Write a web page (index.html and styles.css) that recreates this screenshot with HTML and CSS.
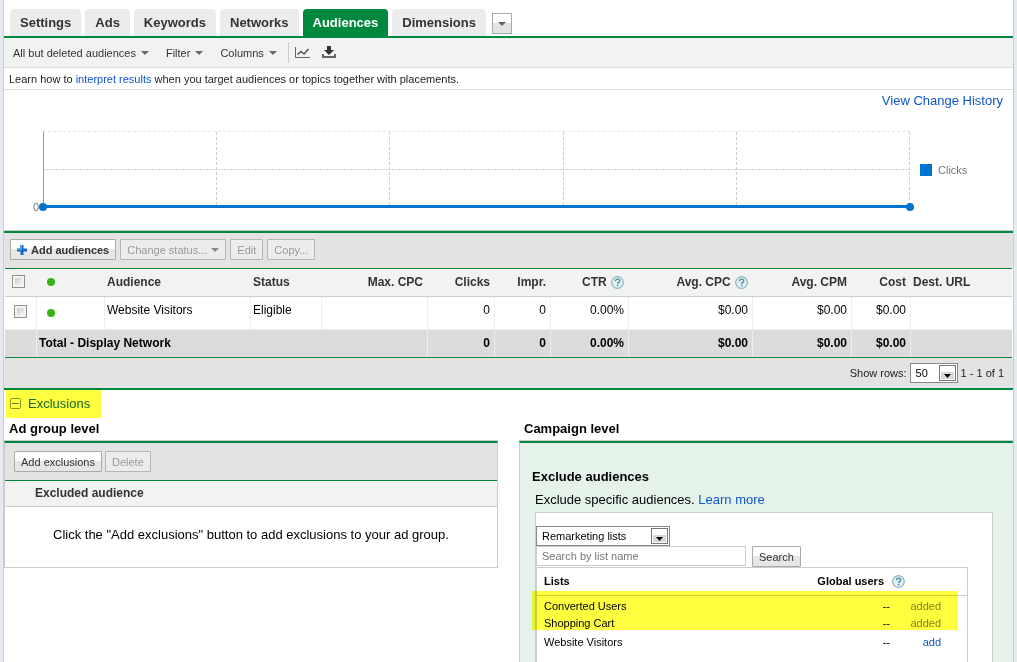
FILE: index.html
```html
<!DOCTYPE html>
<html lang="en">
<head>
    <meta charset="UTF-8">
    <meta name="viewport" content="width=device-width, initial-scale=1.0">
    <title>Audiences</title>
    <link rel="stylesheet" href="styles.css">
</head>
<body>

<!-- Shared help icon -->
<svg class="symbols" width="0" height="0" aria-hidden="true">
    <symbol id="help" viewBox="0 0 13 13">
        <circle cx="6.500" cy="6.500" r="5.800" fill="#e4f1f3" stroke="#8db4bd" stroke-width="1.200"/>
        <path d="M4.500 5.200c0-2.800 4.200-2.700 4.200-.3 0 1.500-2 1.400-2 3" fill="none" stroke="#4b8da6" stroke-width="1.400"/>
        <rect x="5.900" y="8.900" width="1.600" height="1.400" fill="#4b8da6"/>
    </symbol>
</svg>

<div class="page">
    <nav class="tabs">
        <a class="tab" href="#">Settings</a>
        <a class="tab" href="#">Ads</a>
        <a class="tab" href="#">Keywords</a>
        <a class="tab" href="#">Networks</a>
        <a class="tab active" href="#">Audiences</a>
        <a class="tab" href="#">Dimensions</a>
        <button class="tab-more" aria-label="More tabs"><span class="arrow"></span></button>
    </nav>

    <div class="toolbar">
        <button class="menu">All but deleted audiences <span class="arrow"></span></button>
        <button class="menu">Filter <span class="arrow"></span></button>
        <button class="menu">Columns <span class="arrow"></span></button>
        <div class="tools">
            <button class="tool" aria-label="Toggle chart">
                <svg width="16" height="13" viewBox="0 0 16 13">
                    <path d="M0.500 1v10.500H15" fill="none" stroke="#666" stroke-width="1"/>
                    <path d="M2.500 8.500l3.500-3 3 2.500 4.500-5" fill="none" stroke="#555" stroke-width="1.600"/>
                </svg>
            </button>
            <button class="tool" aria-label="Download">
                <svg width="14" height="13" viewBox="0 0 14 13">
                    <path d="M5 0h4v4h3L7 9 2 4h3z" fill="#333"/>
                    <path d="M0 8h2v2h10V8h2v4H0z" fill="#666"/>
                </svg>
            </button>
        </div>
    </div>

    <p class="hint">Learn how to <a href="#">interpret results</a> when you target audiences or topics together with placements.</p>

    <div class="history"><a href="#">View Change History</a></div>

    <!-- Clicks chart -->
    <div class="chart">
        <span class="axis">0</span>
        <div class="plot">
            <div class="cell"></div>
            <div class="cell"></div>
            <div class="cell"></div>
            <div class="cell"></div>
            <div class="cell"></div>
            <span class="dot start"></span>
            <span class="dot end"></span>
        </div>
        <div class="legend"><span class="swatch"></span>Clicks</div>
    </div>

    <div class="actions">
        <button class="btn strong">
            <svg width="10" height="10" viewBox="0 0 10 10">
                <path d="M3.500 0h3v3.500H10v3H6.500V10h-3V6.500H0v-3h3.500z" fill="#1466c8"/>
                <path d="M3.500 0h1.500v5H0V3.500h3.500z" fill="#5a9be0"/>
            </svg>
            Add audiences
        </button>
        <button class="btn" disabled>Change status... <span class="arrow"></span></button>
        <button class="btn" disabled>Edit</button>
        <button class="btn" disabled>Copy...</button>
    </div>

    <table class="stats">
        <colgroup>
            <col class="c-check"><col class="c-dot"><col class="c-name"><col class="c-status">
            <col class="c-max"><col class="c-clicks"><col class="c-impr"><col class="c-ctr">
            <col class="c-cpc"><col class="c-cpm"><col class="c-cost"><col class="c-url">
        </colgroup>
        <thead>
            <tr>
                <th><input type="checkbox" class="check" aria-label="Select all"></th>
                <th><span class="status-dot"></span></th>
                <th>Audience</th>
                <th>Status</th>
                <th class="num">Max. CPC</th>
                <th class="num">Clicks</th>
                <th class="num">Impr.</th>
                <th class="num">CTR <svg class="help"><use href="#help"/></svg></th>
                <th class="num">Avg. CPC <svg class="help"><use href="#help"/></svg></th>
                <th class="num">Avg. CPM</th>
                <th class="num">Cost</th>
                <th>Dest. URL</th>
            </tr>
        </thead>
        <tbody>
            <tr>
                <td><input type="checkbox" class="check" aria-label="Select Website Visitors"></td>
                <td><span class="status-dot"></span></td>
                <td>Website Visitors</td>
                <td>Eligible</td>
                <td></td>
                <td class="num">0</td>
                <td class="num">0</td>
                <td class="num">0.00%</td>
                <td class="num">$0.00</td>
                <td class="num">$0.00</td>
                <td class="num">$0.00</td>
                <td></td>
            </tr>
        </tbody>
        <tfoot>
            <tr>
                <td></td>
                <td colspan="4">Total - Display Network</td>
                <td class="num">0</td>
                <td class="num">0</td>
                <td class="num">0.00%</td>
                <td class="num">$0.00</td>
                <td class="num">$0.00</td>
                <td class="num">$0.00</td>
                <td></td>
            </tr>
        </tfoot>
    </table>

    <div class="pager">
        <label for="rows">Show rows:</label>
        <select id="rows" class="select rows">
            <option>50</option>
            <option>100</option>
        </select>
        <span>1 - 1 of 1</span>
    </div>

    <button class="exclusions">
        <svg width="11" height="11" viewBox="0 0 11 11">
            <rect x="0.500" y="0.500" width="10" height="10" rx="1" fill="none" stroke="#8a9a10"/>
            <path d="M2 5.500h7" stroke="#5f7a10"/>
        </svg>
        Exclusions
    </button>

    <div class="levels">
        <section class="level">
            <h2>Ad group level</h2>
            <div class="group">
                <div class="group-actions">
                    <button class="btn">Add exclusions</button>
                    <button class="btn" disabled>Delete</button>
                </div>
                <h3>Excluded audience</h3>
                <p>Click the "Add exclusions" button to add exclusions to your ad group.</p>
            </div>
        </section>

        <section class="level">
            <h2>Campaign level</h2>
            <div class="campaign">
                <h3>Exclude audiences</h3>
                <p>Exclude specific audiences. <a href="#">Learn more</a></p>
                <div class="picker">
                    <select class="select kind" aria-label="List type">
                        <option>Remarketing lists</option>
                    </select>
                    <div class="search">
                        <input type="text" placeholder="Search by list name" aria-label="Search by list name">
                        <button class="btn">Search</button>
                    </div>
                    <div class="lists">
                        <table>
                            <thead>
                                <tr>
                                    <th>Lists</th>
                                    <th class="users">Global users</th>
                                    <th class="state"><svg class="help"><use href="#help"/></svg></th>
                                </tr>
                            </thead>
                            <tbody>
                                <tr class="first"><td>Converted Users</td><td class="users">--</td><td class="state added">added</td></tr>
                                <tr><td>Shopping Cart</td><td class="users">--</td><td class="state added">added</td></tr>
                                <tr class="last"><td>Website Visitors</td><td class="users">--</td><td class="state"><a href="#">add</a></td></tr>
                            </tbody>
                        </table>
                        <div class="marker"></div>
                    </div>
                </div>
            </div>
        </section>
    </div>
</div>

</body>
</html>
```

FILE: styles.css
```css
* {
    box-sizing: border-box;
}

body {
    margin: 0;
    background-color: #e6e9f0;
    font-family: "Liberation Sans", Arial, sans-serif;
    font-size: 11px;
    color: #222;
}

a {
    color: #15c;
    text-decoration: none;
}

button, input, select {
    font-family: inherit;
    font-size: 11px;
    color: #222;
}

h2, h3, p {
    margin: 0;
}

.symbols {
    position: absolute;
}

.page {
    display: flex;
    flex-direction: column;
    min-height: 100vh;
    margin: 0 3px;
    background-color: #fff;
    border: 1px solid #ccc;
    border-width: 0 1px;
}

.arrow {
    display: inline-block;
    border: 4px solid transparent;
    border-top-color: #666;
    border-bottom: 0;
}

/* Tabs */
.tabs {
    display: flex;
    align-items: flex-end;
    gap: 4px;
    height: 38px;
    padding-left: 6px;
    border-bottom: 2px solid #00883f;
}

.tab {
    padding: 0 10px;
    border-radius: 4px 4px 0 0;
    background-color: #ececec;
    color: #333;
    font-size: 13px;
    font-weight: bold;
    line-height: 27px;
}

.tab.active {
    background-color: #00883f;
    color: #fff;
}

.tab-more {
    display: flex;
    align-items: center;
    justify-content: center;
    width: 20px;
    height: 21px;
    margin: 0 0 2px 2px;
    padding: 0;
    border: 1px solid #aaa;
    background: linear-gradient(#fff 50%, #e4e4e4 50%);
}

/* Toolbar under the tabs */
.toolbar {
    display: flex;
    align-items: center;
    gap: 17px;
    height: 30px;
    padding-left: 9px;
    border-bottom: 1px solid #ddd;
    background-color: #f1f3f2;
}

.menu, .tool {
    display: flex;
    align-items: center;
    gap: 5px;
    padding: 0;
    border: 0;
    background: none;
    color: #333;
}

.tools {
    display: flex;
    align-items: center;
    gap: 11px;
    height: 21px;
    margin-left: -6px;
    padding-left: 6px;
    border-left: 1px solid #ccc;
}

.hint {
    padding: 1px 5px 0;
    border-bottom: 1px solid #ddd;
    line-height: 20px;
}

.history {
    padding: 0 10px;
    font-size: 13px;
    line-height: 22px;
    text-align: right;
}

/* Chart */
.chart {
    display: flex;
    height: 118px;
    padding: 19px 35px 22px 29px;
    color: #777;
}

.axis {
    align-self: flex-end;
    width: 10px;
    line-height: 14px;
    margin-bottom: -6px;
}

.plot {
    position: relative;
    display: grid;
    grid-template-columns: repeat(5, 1fr);
    flex: 1;
    border-left: 1px solid #999;
    border-top: 1px dashed #e6e6e6;
    border-bottom: 3px solid #0075d0;
    background: repeating-linear-gradient(90deg, #ccc 0 2px, transparent 2px 3px) 0 37px / 100% 1px no-repeat;
}

.cell {
    border-right: 1px dashed #ccc;
}

.dot {
    position: absolute;
    bottom: -6px;
    width: 8px;
    height: 8px;
    border-radius: 50%;
    background-color: #0075d0;
}

.dot.start {
    left: -5px;
}

.dot.end {
    right: -4px;
}

.legend {
    display: flex;
    align-items: center;
    gap: 6px;
    width: 58px;
    margin-left: 10px;
}

.swatch {
    width: 12px;
    height: 12px;
    background-color: #0075d0;
}

/* Buttons */
.actions {
    display: flex;
    align-items: center;
    gap: 4px;
    height: 38px;
    padding-left: 6px;
    border-top: 1px solid #ccc;
    background-color: #e3e3e3;
    box-shadow: inset 0 2px #00883f;
}

.btn {
    display: flex;
    align-items: center;
    gap: 4px;
    height: 21px;
    padding: 0 6px;
    border: 1px solid #aaa;
    border-radius: 1px;
    background: linear-gradient(#fff 45%, #e6e6e6 50%);
    color: #333;
    white-space: nowrap;
}

.btn.strong {
    font-weight: bold;
}

.btn:disabled {
    border-color: #b5b5b5;
    background: #ececec;
    color: #999;
}

.btn:disabled .arrow {
    border-top-color: #888;
}

/* Audience stats */
.stats {
    width: calc(100% - 2px);
    margin-left: 1px;
    border-collapse: separate;
    border-spacing: 0;
    border-top: 1px solid #00883f;
    border-bottom: 1px solid #00883f;
    table-layout: fixed;
    color: #000;
    font-size: 12px;
    line-height: 14px;
}

.c-check { width: 32px; }
.c-dot { width: 68px; }
.c-status { width: 71px; }
.c-max { width: 106px; }
.c-clicks { width: 67px; }
.c-impr { width: 56px; }
.c-ctr { width: 78px; }
.c-cpc { width: 124px; }
.c-cpm { width: 99px; }
.c-cost { width: 59px; }
.c-url { width: 101px; }

.stats th, .stats td {
    padding: 0 4px 0 2px;
    text-align: left;
    white-space: nowrap;
}

.stats th {
    height: 28px;
    padding-bottom: 2px;
    border-bottom: 1px solid #ccc;
    background-color: #f1f3f2;
    color: #333;
}

.stats td {
    height: 33px;
    padding-bottom: 6px;
    border-right: 1px solid #eee;
    border-bottom: 1px solid #eee;
}

.stats td:last-child {
    border-right: 0;
}

.stats tfoot td {
    height: 27px;
    padding-bottom: 2px;
    border-bottom: 0;
    background-color: #dbdbdb;
    font-weight: bold;
}

.stats .num {
    padding-right: 5px;
    text-align: right;
}

.stats td.num {
    padding-right: 4px;
}

.stats th:first-child {
    padding: 0 4px 2px 7px;
}

.stats td:first-child {
    padding: 0 4px 3px 9px;
}

.stats th:nth-child(2), .stats tbody td:nth-child(2) {
    padding: 0 0 1px 10px;
}

.check {
    display: block;
    appearance: none;
    width: 13px;
    height: 13px;
    margin: 0;
    border: 1px solid #8e8f8f;
    background: linear-gradient(135deg, #c8c8c8, #f6f6f6) center / 7px 7px no-repeat #f4f4f4;
}

.status-dot {
    display: block;
    width: 8px;
    height: 8px;
    border-radius: 50%;
    background-color: #36b413;
}

.help {
    width: 13px;
    height: 13px;
    vertical-align: -3px;
}

.stats .help {
    margin-left: 1px;
}

.pager {
    display: flex;
    align-items: center;
    justify-content: flex-end;
    gap: 3px;
    height: 32px;
    padding-right: 9px;
    border-bottom: 2px solid #00883f;
    background-color: #e3e3e3;
}

.select {
    appearance: none;
    height: 20px;
    padding: 0 5px 1px;
    border: 1px solid #888;
    border-radius: 0;
    background: url("data:image/svg+xml,%3Csvg xmlns='http://www.w3.org/2000/svg' width='17' height='16'%3E%3Crect x='.5' y='.5' width='16' height='15' fill='%23fff' stroke='%23777'/%3E%3Crect x='2' y='7' width='13' height='7' fill='%23d8d8d8'/%3E%3Cpath d='M5 9h7l-3.5 4z'/%3E%3C/svg%3E") right 1px center no-repeat #fff;
    color: #000;
}

.rows {
    width: 48px;
}

/* Exclusions */
.exclusions {
    display: flex;
    align-items: center;
    align-self: flex-start;
    gap: 7px;
    height: 28px;
    margin-left: 2px;
    padding: 0 11px 1px 4px;
    border: 0;
    background-color: #ffff3f;
    color: #12692b;
    font-size: 13px;
}

.levels {
    display: grid;
    grid-template-columns: 1fr 1fr;
    gap: 21px;
    flex: 1;
    color: #000;
}

.level {
    display: flex;
    flex-direction: column;
}

.level h2 {
    padding: 0 5px;
    border-bottom: 1px solid #ccc;
    font-size: 13px;
    line-height: 22px;
}

.group {
    border: 1px solid #ccc;
    border-top: 2px solid #00883f;
}

.group-actions {
    display: flex;
    align-items: center;
    gap: 3px;
    height: 38px;
    padding-left: 9px;
    border-bottom: 1px solid #00883f;
    background-color: #e3e3e3;
}

.group h3 {
    padding-left: 30px;
    border-bottom: 1px solid #ccc;
    background-color: #f1f3f2;
    color: #333;
    font-size: 12px;
    line-height: 25px;
}

.group p {
    padding: 18px 20px 22px 48px;
    font-size: 13px;
    line-height: 20px;
}

.campaign {
    display: flex;
    flex-direction: column;
    flex: 1;
    padding: 23px 20px 0 12px;
    border-left: 1px solid #ccc;
    border-top: 2px solid #00883f;
    background-color: #e4f2ea;
    font-size: 13px;
}

.campaign h3 {
    font-size: 13px;
    line-height: 22px;
}

.campaign p {
    padding-left: 3px;
    line-height: 24px;
}

.picker {
    display: flex;
    flex-direction: column;
    flex: 1;
    margin-left: 3px;
    padding: 13px 24px 0 0;
    border: 1px solid #ccc;
    border-bottom: 0;
    background-color: #fff;
    font-size: 11px;
}

.kind {
    width: 134px;
}

.search {
    display: flex;
    gap: 6px;
}

.search input {
    width: 210px;
    height: 20px;
    padding: 0 5px;
    border: 1px solid #ccc;
}

.search input::placeholder {
    color: #777;
}

.lists {
    position: relative;
    flex: 1;
    border: 1px solid #ccc;
    border-bottom: 0;
}

.lists table {
    width: 100%;
    border-spacing: 0;
    line-height: 17px;
}

.lists th, .lists td {
    padding: 0 7px;
    text-align: left;
}

.lists th {
    height: 28px;
    border-bottom: 1px solid #ccc;
}

.lists .users {
    padding: 0;
    text-align: right;
}

.lists th.users {
    padding-right: 6px;
}

.lists .state {
    width: 77px;
    padding: 0 26px 0 2px;
}

.lists td.state {
    text-align: right;
}

.lists .added {
    color: #808080;
}

.lists .first td, .lists .last td {
    padding-top: 2px;
}

/* Yellow marker drawn over the rows already added */
.marker {
    position: absolute;
    top: 23px;
    right: 9px;
    left: -5px;
    height: 39px;
    background-color: #ffff3f;
    mix-blend-mode: multiply;
}
```
